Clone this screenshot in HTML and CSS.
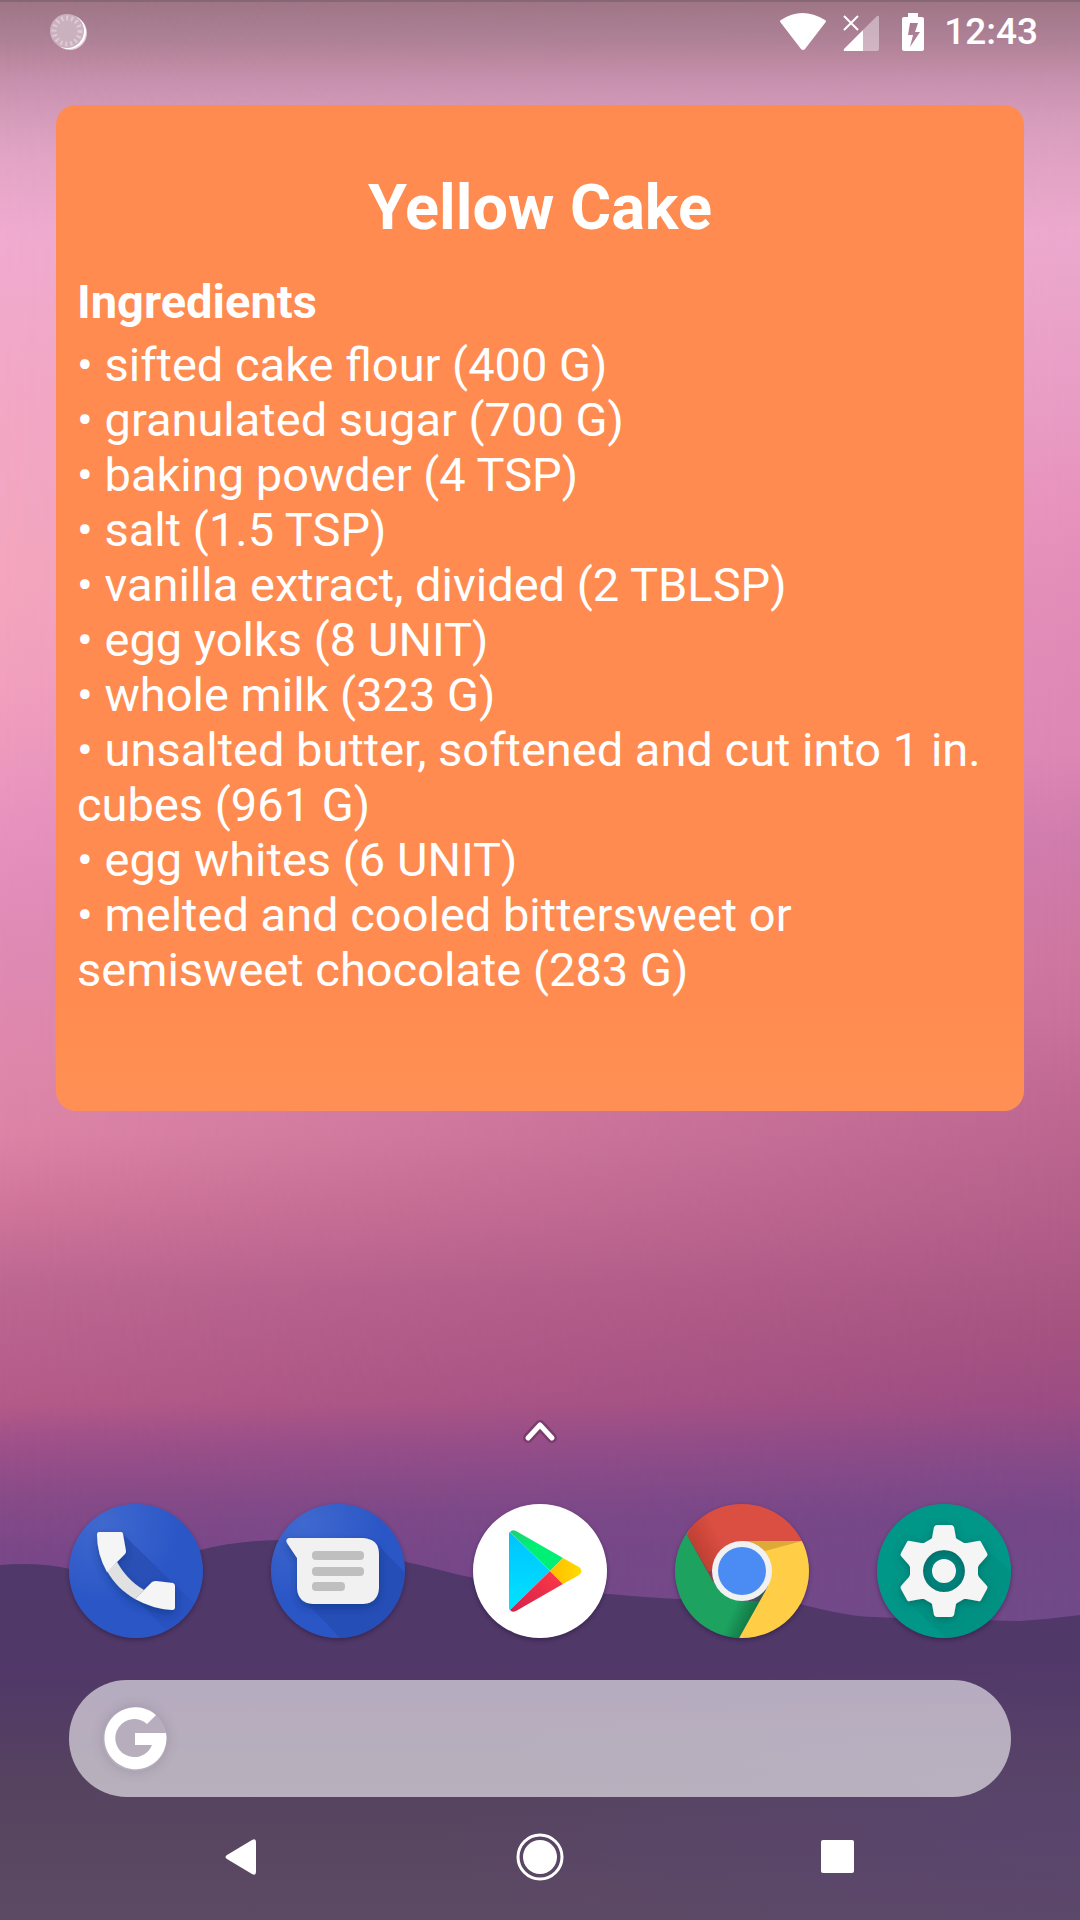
FILE: index.html
```html
<!DOCTYPE html>
<html lang="en">
<head>
<meta charset="utf-8">
<meta name="viewport" content="width=device-width, initial-scale=1">
<title>Home</title>
<link rel="stylesheet" href="styles.css">
</head>
<body class="home">
  <div class="wallpaper" aria-hidden="true">
    <svg class="hills" viewBox="0 0 1080 380" preserveAspectRatio="none">
      <defs>
        <linearGradient id="hill" x1="0" y1="0" x2="0" y2="1">
          <stop offset="0" stop-color="#4f386a"/>
          <stop offset=".35" stop-color="#513868"/>
          <stop offset=".65" stop-color="#56435f"/>
          <stop offset="1" stop-color="#5c4a64"/>
        </linearGradient>
        <radialGradient id="hillRight" cx="1" cy=".7" r=".6">
          <stop offset="0" stop-color="#5b4476" stop-opacity=".6"/>
          <stop offset="1" stop-color="#5b4476" stop-opacity="0"/>
        </radialGradient>
      </defs>
      <path fill="url(#hill)" d="M0 25Q40 22 70 29Q140 22 200 10Q240 0 285 0C340 6 400 20 440 30C500 46 560 52 610 54Q640 57 680 59Q740 62 800 64Q850 77 875 77C900 78 960 80 1020 81Q1050 79 1080 75V380H0Z"/>
      <path fill="url(#hillRight)" d="M0 81H1080V380H0Z"/>
    </svg>
  </div>

  <header class="status">
    <svg class="status-sync" viewBox="0 0 38 38" role="img" aria-label="Syncing">
      <circle cx="20" cy="20" r="17" fill="#fff" opacity=".6"/>
      <circle cx="19" cy="19" r="17" fill="#fff"/>
      <circle cx="17" cy="18" r="17" fill="#cbb0be"/>
      <circle cx="17" cy="18" r="13" fill="none" stroke="#dccbd5" stroke-width="5" stroke-dasharray="2 3"/>
    </svg>
    <svg class="status-wifi" viewBox="0 0 46 38" role="img" aria-label="Wi-Fi">
      <path fill="#fff" d="M1 10Q-1 8 1 7Q22-7 45 7Q47 8 45 10L25 36Q23 38 21 36Z"/>
    </svg>
    <svg class="status-signal" viewBox="0 0 36 38" role="img" aria-label="No mobile signal">
      <path fill="#fff" opacity=".4" d="M20 17L34 3Q36 2 36 4V36Q36 38 34 38H20Z"/>
      <path fill="#fff" d="M20 17V38H2Q0 38 1 36Z"/>
      <path stroke="#fff" stroke-width="2" d="M1 3L15 17M15 3L1 17"/>
    </svg>
    <svg class="status-battery" viewBox="0 0 22 38" role="img" aria-label="Charging">
      <path fill="#fff" fill-rule="evenodd" d="M6 0H16V4H20Q22 4 22 6V36Q22 38 20 38H2Q0 38 0 36V6Q0 4 2 4H6ZM8 10L6 22H11L8 34L18 19H13L16 10Z"/>
    </svg>
    <time class="status-time">12:43</time>
  </header>

  <main class="widgets">
    <article class="recipe">
      <h1 class="recipe-title">Yellow Cake</h1>
      <h2 class="recipe-heading">Ingredients</h2>
      <ul class="ingredients">
        <li>sifted cake flour (400 G)</li>
        <li>granulated sugar (700 G)</li>
        <li>baking powder (4 TSP)</li>
        <li>salt (1.5 TSP)</li>
        <li>vanilla extract, divided (2 TBLSP)</li>
        <li>egg yolks (8 UNIT)</li>
        <li>whole milk (323 G)</li>
        <li>unsalted butter, softened and cut into 1 in. cubes (961 G)</li>
        <li>egg whites (6 UNIT)</li>
        <li>melted and cooled bittersweet or semisweet chocolate (283 G)</li>
      </ul>
    </article>
  </main>

  <footer class="dock">
    <button class="drawer" type="button" aria-label="All apps">
      <svg viewBox="0 0 48 48">
        <path class="drawer-edge" d="M12 32L24 19L36 32"/>
        <path class="drawer-line" d="M12 32L24 19L36 32"/>
      </svg>
    </button>

    <nav class="apps" aria-label="Favourite apps">
      <button class="app" type="button" aria-label="Phone">
        <svg viewBox="0 0 134 134">
          <defs>
            <radialGradient id="blue" cx=".25" cy=".15" r=".6"><stop offset="0" stop-color="#4069cf"/><stop offset="1" stop-color="#2a56c6"/></radialGradient>
            <linearGradient id="cast" x1=".2" y1=".2" x2=".8" y2=".8"><stop offset="0" stop-color="#1f3f9c" stop-opacity=".45"/><stop offset="1" stop-color="#1f3f9c" stop-opacity=".1"/></linearGradient>
            <clipPath id="disc"><circle cx="67" cy="67" r="67"/></clipPath>
            <filter id="soft" x="-20%" y="-20%" width="140%" height="150%"><feDropShadow dx="0" dy="4" stdDeviation="4" flood-color="#102b70" flood-opacity=".45"/></filter>
          </defs>
          <circle cx="67" cy="67" r="67" fill="url(#blue)"/>
          <g clip-path="url(#disc)"><path fill="url(#cast)" d="M54 30L140 114L110 140L67 95L48 58Z"/></g>
          <g filter="url(#soft)">
            <path fill="#e1e1e1" d="M48 58C54 69 63 79 75 86L66 95C54 88 45 79 38 67Z"/>
            <path fill="#f5f5f5" d="M30 28H52Q54 28 54 30L57 47Q57 49 56 50L38 68Q28 50 28 31Q28 28 30 28Z"/>
            <path fill="#f5f5f5" d="M66 95L83 78Q85 77 87 77L104 79Q106 80 106 82V103Q106 106 103 106Q84 105 66 95Z"/>
          </g>
        </svg>
      </button>
      <button class="app" type="button" aria-label="Messages">
        <svg viewBox="0 0 134 134">
          <circle cx="67" cy="67" r="67" fill="url(#blue)"/>
          <g clip-path="url(#disc)"><path fill="#1f3f9c" opacity=".35" d="M104 38L140 75V140H75L32 95Z"/></g>
          <path filter="url(#soft)" fill="#f1f1f1" d="M18 34H92Q108 35 108 50V84Q107 99 92 100H42Q27 99 26 84V54L16 39Q14 35 18 34Z"/>
          <g fill="#bfbfbf"><rect x="41" y="47" width="52" height="9" rx="4"/><rect x="41" y="63" width="52" height="9" rx="4"/><rect x="41" y="78" width="33" height="9" rx="4"/></g>
        </svg>
      </button>
      <button class="app" type="button" aria-label="Play Store">
        <svg viewBox="0 0 134 134">
          <defs>
            <linearGradient id="playBlue" x1="0" y1="0" x2="0" y2="1"><stop offset="0" stop-color="#00c3ff"/><stop offset="1" stop-color="#00e3ff"/></linearGradient>
            <linearGradient id="playRed" x1="1" y1="0" x2="0" y2="1"><stop offset="0" stop-color="#ff3a44"/><stop offset="1" stop-color="#d1204f"/></linearGradient>
            <linearGradient id="playGreen" x1="0" y1="0" x2="1" y2="1"><stop offset="0" stop-color="#1fce70"/><stop offset=".4" stop-color="#00f076"/></linearGradient>
            <linearGradient id="playYellow" x1="0" y1="0" x2="1" y2="0"><stop offset="0" stop-color="#ffbc00"/><stop offset="1" stop-color="#ffdc00"/></linearGradient>
          </defs>
          <circle cx="67" cy="67" r="67" fill="#fff"/>
          <path fill="url(#playBlue)" d="M37 28L77 67L37 106Q36 106 36 104V30Q36 28 37 28Z"/>
          <path fill="url(#playGreen)" d="M37 28Q39 25 43 27L90 54L77 67Z"/>
          <path fill="url(#playRed)" d="M37 106Q39 109 43 107L90 80L77 67Z"/>
          <path fill="url(#playYellow)" d="M90 54L106 63Q111 67 106 71L90 80L77 67Z"/>
        </svg>
      </button>
      <button class="app" type="button" aria-label="Chrome">
        <svg viewBox="0 0 134 134">
          <defs>
            <linearGradient id="redFold" gradientUnits="userSpaceOnUse" x1="22" y1="56" x2="50" y2="40"><stop offset="0" stop-color="#a63226" stop-opacity=".6"/><stop offset="1" stop-color="#a63226" stop-opacity="0"/></linearGradient>
            <linearGradient id="greenFold" gradientUnits="userSpaceOnUse" x1="78" y1="110" x2="60" y2="102"><stop offset="0" stop-color="#0b5c33" stop-opacity=".6"/><stop offset="1" stop-color="#0b5c33" stop-opacity="0"/></linearGradient>
          </defs>
          <g clip-path="url(#disc)">
            <path fill="#db4f42" d="M0 0H134V37H67V67H33L12 31Z"/>
            <path fill="#1da260" d="M0 10L12 31L41 82L67 97H86L64 134H0Z"/>
            <path fill="#ffcd46" d="M67 37H134V134H64L93 82Z"/>
            <path fill="url(#redFold)" d="M12 31L38 78L67 40L30 0Z"/>
            <path fill="url(#greenFold)" d="M91 86L64 134H36L60 90Z"/>
            <path fill="#c69130" opacity=".6" d="M67 37H127L90 47Z"/>
          </g>
          <circle cx="67" cy="67" r="30" fill="#f1f1f1"/>
          <circle cx="67" cy="67" r="24" fill="#4b8bf4"/>
        </svg>
      </button>
      <button class="app" type="button" aria-label="Settings">
        <svg viewBox="0 0 134 134">
          <defs><filter id="gearShade" x="-20%" y="-20%" width="140%" height="140%"><feDropShadow dx="0" dy="2" stdDeviation="4" flood-color="#004d45" flood-opacity=".5"/></filter></defs>
          <circle cx="67" cy="67" r="67" fill="#009688"/>
          <g clip-path="url(#disc)"><path fill="#00796b" opacity=".15" d="M108 45L140 72V140H75L30 97Z"/></g>
          <circle cx="67" cy="67" r="24" fill="#00827c"/>
          <path filter="url(#gearShade)" fill="#f5f5f5" fill-rule="evenodd" d="M60 21H74Q76 21 77 23L79 34L80 35L87 39H90L101 37Q103 36 104 38L110 49Q111 51 110 52L102 61L101 63V71L102 73L110 82Q111 83 110 85L104 96Q103 98 101 97L90 95H87L80 99L79 100L77 111Q76 113 74 113H60Q58 113 57 111L55 100L54 99L47 95H44L33 97Q31 98 30 96L24 85Q23 83 24 82L32 73L33 71V63L32 61L24 52Q23 51 24 49L30 38Q31 36 33 37L44 39H47L54 35L55 34L57 23Q58 21 60 21ZM67 46A21 21 0 1 0 67 88A21 21 0 1 0 67 46Z"/>
          <circle cx="67" cy="67" r="12" fill="#f5f5f5"/>
        </svg>
      </button>
    </nav>

    <form class="search" role="search">
      <button class="search-logo" type="submit" aria-label="Search Google">
        <svg viewBox="-32 -32 64 64"><path fill="#fff" d="M21-24A31 31 0 1 0 31-6H0V6H17A19 19 0 1 1 12-15Z"/></svg>
      </button>
      <input class="search-input" type="search" aria-label="Search">
    </form>
  </footer>

  <nav class="navbar" aria-label="System">
    <button class="nav-button" type="button" aria-label="Back">
      <svg viewBox="0 0 48 48"><path fill="#fff" d="M9 22L34 7Q38 5 38 9V39Q38 43 34 41L9 26Q6 24 9 22Z"/></svg>
    </button>
    <button class="nav-button" type="button" aria-label="Home">
      <svg viewBox="0 0 48 48"><circle cx="24" cy="24" r="17" fill="#fff"/><circle cx="24" cy="24" r="22" fill="none" stroke="#fff" stroke-width="3"/></svg>
    </button>
    <button class="nav-button" type="button" aria-label="Recent apps">
      <svg viewBox="0 0 48 48"><rect x="7" y="7" width="33" height="33" rx="2" fill="#fff"/></svg>
    </button>
  </nav>
</body>
</html>
```
FILE: styles.css
```css
* {
  box-sizing: border-box;
}

.home {
  position: relative;
  display: flex;
  flex-direction: column;
  min-height: 100vh;
  margin: 0;
  color: #fff;
  font-family: Roboto, "Noto Sans", sans-serif;
}

button {
  padding: 0;
  border: 0;
  background: none;
  color: inherit;
  font: inherit;
  cursor: pointer;
}

svg {
  display: block;
}

/* Wallpaper: two vertical skies blended from left to right, hills on top */
.wallpaper {
  position: absolute;
  inset: 0;
  z-index: -1;
  overflow: hidden;
  border-top: 2px solid #876674;
  background: linear-gradient(#9f7686 0, #ae8197 2%, #bb88a0 3%, #c690ad 4%, #d59cba 6%, #e2a4c5 8%, #f0abd0 12%, #f3a7c4 21%, #f4a6be 30%, #f19fbd 36%, #e792bf 43%, #df8bb5 49%, #df88ac 55%, #dd84a6 59%, #d0759a 63%, #bd6792 67%, #b55b88 73%, #a0518a 75%, #884b88 78%, #7a4788 81%);
}

.wallpaper::before {
  content: "";
  position: absolute;
  inset: 0;
  background: linear-gradient(#9f7686 0, #ae8197 2%, #bb88a0 3%, #c690ad 4%, #d59cba 6%, #dfa1c2 8%, #eca9cd 12%, #e89cc4 21%, #e793bd 26%, #e28cb8 31%, #dc87b4 39%, #cf7bac 44%, #cd769f 50%, #c9719b 53%, #bf6892 57%, #b35f8a 63%, #a65381 69%, #9b4c83 73%, #854a88 76%, #744788 79%, #704a88 84%);
  -webkit-mask-image: linear-gradient(to right, transparent, #000);
  mask-image: linear-gradient(to right, transparent, #000);
}

.hills {
  position: absolute;
  inset: auto 0 0;
  width: 100%;
  height: 380px;
}

/* Status bar */
.status {
  display: flex;
  align-items: center;
  height: 64px;
  padding: 0 42px 0 50px;
}

.status-sync {
  width: 38px;
  height: 38px;
  margin-right: auto;
}

.status-wifi {
  width: 46px;
  height: 38px;
}

.status-signal {
  width: 36px;
  height: 38px;
  margin-left: 17px;
}

.status-battery {
  width: 22px;
  height: 38px;
  margin: 0 20px 0 23px;
}

.status-time {
  font-size: 37px;
  font-weight: 500;
  line-height: 44px;
}

/* Recipe widget */
.widgets {
  flex: 1;
  padding: 41px 56px;
}

.recipe {
  padding: 66px 21px 114px;
  border-radius: 20px;
  background: linear-gradient(#ff8b50 88%, #ff9055);
}

.recipe-title {
  margin: 0 0 29px;
  font-size: 63px;
  font-weight: 700;
  line-height: 74px;
  text-align: center;
}

.recipe-heading {
  margin: 0 0 8px;
  font-size: 47px;
  font-weight: 700;
  line-height: 55px;
}

.ingredients {
  margin: 0;
  padding: 0;
  list-style: none;
  font-size: 47px;
  line-height: 55px;
}

.ingredients li::before {
  content: "• ";
}

/* Dock */
.dock {
  display: flex;
  flex-direction: column;
  padding: 0 69px;
}

.drawer {
  align-self: center;
  width: 48px;
  height: 48px;
  margin-bottom: 50px;
}

.drawer-edge,
.drawer-line {
  fill: none;
  stroke-linecap: round;
  stroke-linejoin: round;
}

.drawer-edge {
  stroke: #7c3d6e;
  stroke-width: 10px;
}

.drawer-line {
  stroke: #fff;
  stroke-width: 5px;
}

.apps {
  display: flex;
  justify-content: space-between;
}

.app {
  width: 134px;
  height: 134px;
  border-radius: 50%;
  box-shadow: 0 2px 4px rgb(30 15 50 / 45%);
}

.search {
  display: flex;
  align-items: center;
  height: 117px;
  margin-top: 42px;
  padding: 0 34px;
  border-radius: 58px;
  background: rgb(255 255 255 / 58%);
}

.search-logo {
  width: 64px;
  height: 64px;
  border-radius: 50%;
  box-shadow: 0 0 12px rgb(90 75 105 / 25%);
}

.search-input {
  flex: 1;
  min-width: 0;
  height: 64px;
  padding: 0 24px;
  border: 0;
  outline: 0;
  background: none;
  color: #fff;
  font: inherit;
  font-size: 37px;
}

/* System navigation */
.navbar {
  display: flex;
  justify-content: center;
  height: 123px;
  padding-bottom: 4px;
}

.nav-button {
  display: flex;
  flex: 0 1 298px;
  align-items: center;
  justify-content: center;
}

.nav-button svg {
  width: 48px;
  height: 48px;
}
```
